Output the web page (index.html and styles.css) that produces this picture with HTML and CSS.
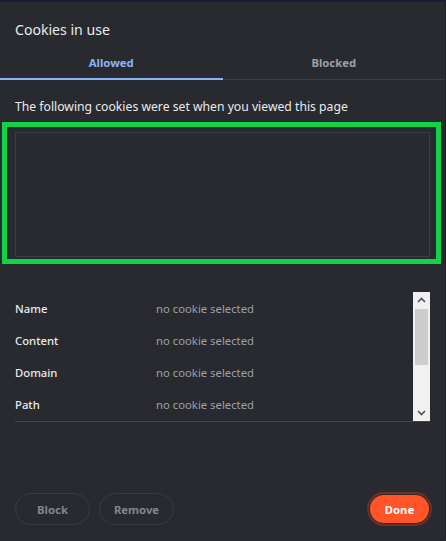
FILE: index.html
```html
<!DOCTYPE html>
<html lang="en">
<head>
  <meta charset="UTF-8">
  <meta name="viewport" content="width=device-width, initial-scale=1.0">
  <title>Cookies in use</title>
  <link rel="stylesheet" href="styles.css">
</head>
<body>

  <div class="cookies-dialog">
    <h1 class="dialog-title">Cookies in use</h1>

    <!-- Tabs -->
    <div class="tabs">
      <div class="tab active">Allowed</div>
      <div class="tab">Blocked</div>
    </div>

    <p class="intro">The following cookies were set when you viewed this page</p>

    <!-- Cookie tree (empty) -->
    <div class="cookie-tree"></div>
    <div class="highlight"></div>

    <!-- Cookie details -->
    <div class="details">
      <div class="details-rows">
        <div class="detail-row">
          <span class="detail-label">Name</span>
          <span class="detail-value">no cookie selected</span>
        </div>
        <div class="detail-row">
          <span class="detail-label">Content</span>
          <span class="detail-value">no cookie selected</span>
        </div>
        <div class="detail-row">
          <span class="detail-label">Domain</span>
          <span class="detail-value">no cookie selected</span>
        </div>
        <div class="detail-row">
          <span class="detail-label">Path</span>
          <span class="detail-value">no cookie selected</span>
        </div>
      </div>
      <div class="scrollbar">
        <svg class="arrow" width="17" height="17" viewBox="0 0 17 17">
          <path d="M5 10 L8.5 6.5 L12 10" fill="none" stroke="#505050" stroke-width="1.6"/>
        </svg>
        <div class="thumb"></div>
        <div class="track"></div>
        <svg class="arrow" width="17" height="17" viewBox="0 0 17 17">
          <path d="M5 7 L8.5 10.5 L12 7" fill="none" stroke="#505050" stroke-width="1.6"/>
        </svg>
      </div>
    </div>

    <!-- Buttons -->
    <div class="dialog-footer">
      <div class="left-buttons">
        <button class="pill-button">Block</button>
        <button class="pill-button">Remove</button>
      </div>
      <button class="done-button">Done</button>
    </div>
  </div>

</body>
</html>
```

FILE: styles.css
```css
/* styles.css */
body {
  font-family: "Noto Sans", "Open Sans", Arial, sans-serif;
  background-color: #292a2f;
  color: #e8eaed;
  margin: 0;
  padding: 0;
  border-top: 2px solid #1d1a33;
  border-right: 1px solid #1f2024;
  height: 539px;
  box-sizing: border-box;
  overflow: hidden;
}

.cookies-dialog {
  position: relative;
}

.dialog-title {
  font-size: 14.1px;
  font-weight: normal;
  line-height: 20px;
  margin: 0;
  padding: 18px 15px 0;
}

.tabs {
  display: flex;
  margin-top: 7px;
  border-bottom: 1px solid #3c3d42;
}

.tab {
  flex: 1;
  text-align: center;
  font-size: 11.3px;
  font-weight: bold;
  color: #9aa0a6;
  height: 32px;
  line-height: 31px;
  box-sizing: border-box;
}

.tab.active {
  color: #8ab4f8;
  border-bottom: 2px solid #8ab4f8;
  margin-bottom: -1px;
  height: 33px;
}

.intro {
  font-size: 12.2px;
  line-height: 18px;
  margin: 18px 15px 0;
}

.cookie-tree {
  margin: 16px 15px 0;
  height: 123px;
  border: 1px solid #3c3d42;
}

.highlight {
  position: absolute;
  left: 2px;
  top: 120px;
  width: 429px;
  height: 132px;
  border: 5px solid #12d246;
}

.details {
  display: flex;
  margin: 35px 15px 0;
  height: 129px;
  border-bottom: 1px solid #43444a;
}

.details-rows {
  flex: 1;
}

.detail-row {
  display: flex;
  height: 32px;
  align-items: center;
  font-size: 11.3px;
}

.detail-label {
  width: 141px;
  color: #e8eaed;
  font-weight: 500;
}

.detail-value {
  color: #9aa0a6;
}

.scrollbar {
  width: 17px;
  background-color: #f1f1f1;
  display: flex;
  flex-direction: column;
}

.scrollbar .arrow {
  display: block;
}

.thumb {
  height: 56px;
  background-color: #cdcdcd;
  margin: 0 2px;
}

.track {
  flex: 1;
}

.dialog-footer {
  display: flex;
  justify-content: space-between;
  align-items: center;
  margin: 71px 15px 0;
}

.left-buttons {
  display: flex;
  gap: 9px;
}

.pill-button {
  font-family: inherit;
  font-size: 11.3px;
  font-weight: bold;
  color: #80868b;
  background: transparent;
  border: 1px solid #3a3b40;
  border-radius: 16px;
  height: 32px;
  width: 75px;
}

.done-button {
  font-family: inherit;
  font-size: 11.3px;
  font-weight: bold;
  color: #fff;
  background-color: #ff5528;
  border: none;
  border-radius: 15px;
  height: 28px;
  width: 59px;
  margin-right: 1px;
  box-shadow: 0 0 0 1px #2f2a2c, 0 0 0 3px #6d3126;
}
```
